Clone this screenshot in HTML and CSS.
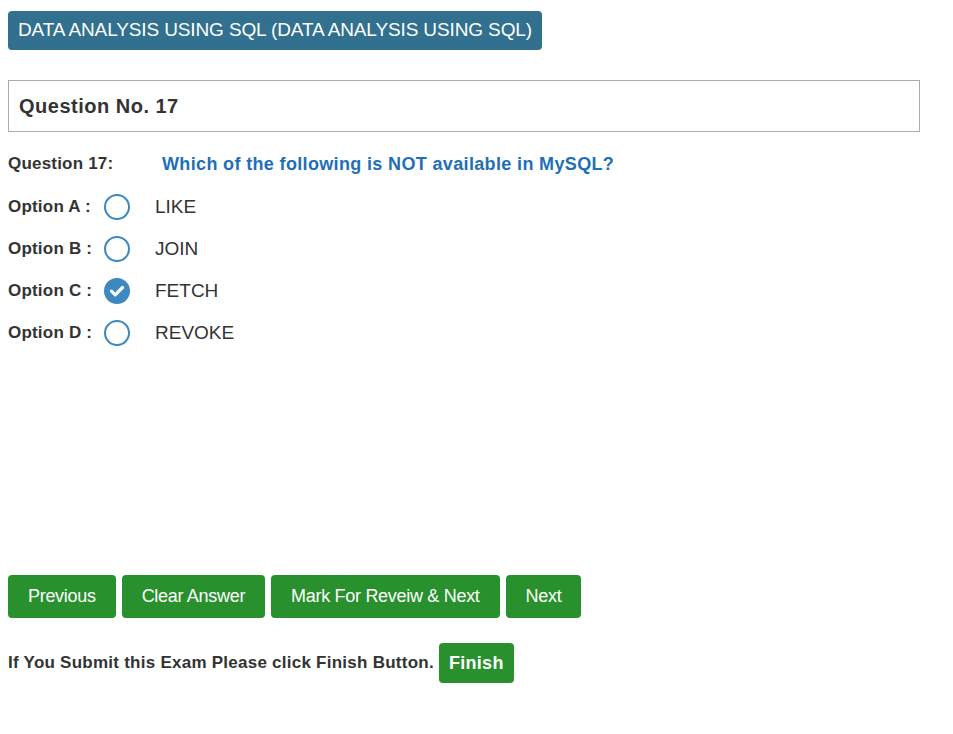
FILE: index.html
```html
<!DOCTYPE html>
<html>
<head>
<meta charset="utf-8">
<link rel="stylesheet" href="styles.css">
</head>
<body>
<div class="page">
  <div class="title-row"><span class="title">DATA ANALYSIS USING SQL (DATA ANALYSIS USING SQL)</span></div>
  <div class="qbox">Question No. 17</div>
  <div class="qrow">
    <span class="qlabel">Question 17:</span>
    <span class="qtext">Which of the following is NOT available in MySQL?</span>
  </div>
  <div class="opt">
    <span class="olabel">Option A :</span>
    <span class="radio"></span>
    <span class="otext">LIKE</span>
  </div>
  <div class="opt">
    <span class="olabel">Option B :</span>
    <span class="radio"></span>
    <span class="otext">JOIN</span>
  </div>
  <div class="opt">
    <span class="olabel">Option C :</span>
    <span class="radio checked"><svg viewBox="0 0 26 26" width="26" height="26"><circle cx="13" cy="13" r="13" fill="#3c88bf"/><path d="M7.5 13.2 L11.2 16.8 L18.5 9.5" fill="none" stroke="#fff" stroke-width="3.2" stroke-linecap="round" stroke-linejoin="round"/></svg></span>
    <span class="otext">FETCH</span>
  </div>
  <div class="opt">
    <span class="olabel">Option D :</span>
    <span class="radio"></span>
    <span class="otext">REVOKE</span>
  </div>
  <div class="buttons">
    <button class="btn">Previous</button>
    <button class="btn">Clear Answer</button>
    <button class="btn">Mark For Reveiw &amp; Next</button>
    <button class="btn">Next</button>
  </div>
  <div class="finish-row">
    <span class="finish-text">If You Submit this Exam Please click Finish Button.</span>
    <button class="btn finish">Finish</button>
  </div>
</div>
</body>
</html>
```
FILE: styles.css
```css
html, body {
  margin: 0;
  padding: 0;
  background: #fff;
}
body {
  font-family: "Liberation Sans", Arial, sans-serif;
  color: #333;
}
.page {
  padding: 11px 8px 0 8px;
}
.title-row {
  display: flex;
}
.title {
  background: #31708f;
  color: #fff;
  font-size: 19px;
  letter-spacing: -0.12px;
  line-height: 38px;
  height: 39px;
  padding: 0 10px;
  border-radius: 4px;
  white-space: nowrap;
}
.qbox {
  margin-top: 30px;
  box-sizing: border-box;
  width: 912px;
  height: 52px;
  border: 1px solid #aaa;
  padding-left: 10px;
  display: flex;
  align-items: center;
  font-size: 20px;
  letter-spacing: 0.5px;
  font-weight: bold;
  color: #333;
}
.qrow {
  margin-top: 20px;
  margin-bottom: 10px;
  display: flex;
  align-items: center;
  height: 24px;
}
.qlabel {
  width: 154px;
  font-weight: bold;
  font-size: 17px;
  letter-spacing: 0.2px;
}
.qtext {
  color: #1f6fb8;
  font-weight: bold;
  font-size: 18px;
  letter-spacing: 0.35px;
}
.opt {
  display: flex;
  align-items: center;
  height: 42px;
}
.olabel {
  width: 96px;
  font-weight: bold;
  font-size: 17px;
  letter-spacing: 0.2px;
  white-space: nowrap;
}
.radio {
  width: 26px;
  height: 26px;
  box-sizing: border-box;
  border: 2px solid #3c88bf;
  border-radius: 50%;
  display: block;
}
.radio.checked {
  border: none;
}
.radio svg {
  display: block;
}
.otext {
  margin-left: 25px;
  font-size: 19px;
  color: #333;
}
.buttons {
  margin-top: 221px;
  display: flex;
  gap: 6px;
}
.btn {
  font-family: "Liberation Sans", Arial, sans-serif;
  background: #28902d;
  color: #fff;
  border: none;
  border-radius: 4px;
  font-size: 18px;
  letter-spacing: -0.3px;
  height: 43px;
  padding: 0 20px;
  cursor: pointer;
}
.finish-row {
  margin-top: 25px;
  display: flex;
  align-items: center;
  gap: 5px;
}
.finish-text {
  font-weight: bold;
  font-size: 17px;
  letter-spacing: 0.25px;
  color: #333;
}
.btn.finish {
  font-weight: bold;
  height: 40px;
  padding: 0 10px;
  letter-spacing: 0.3px;
}
```
